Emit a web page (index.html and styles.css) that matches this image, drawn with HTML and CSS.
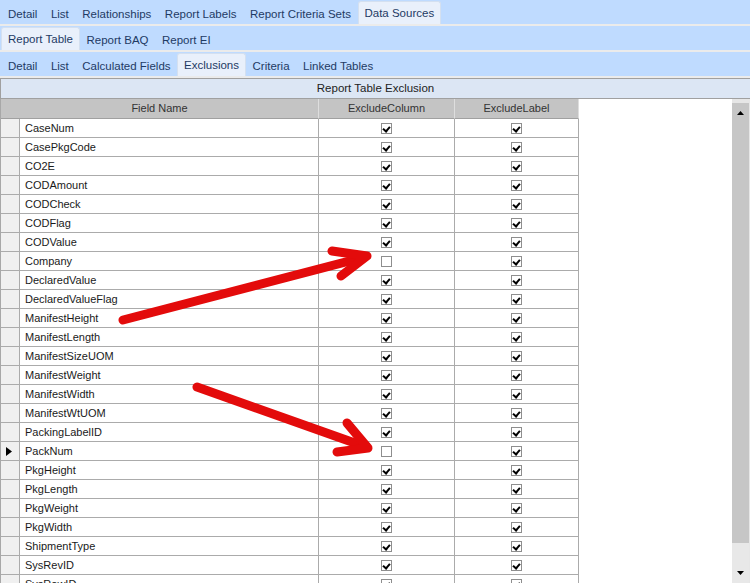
FILE: index.html
```html
<!DOCTYPE html>
<html>
<head>
<meta charset="utf-8">
<link rel="stylesheet" href="styles.css">
</head>
<body>
<div class="tabbar">
  <div class="tab">Detail</div>
  <div class="tab">List</div>
  <div class="tab">Relationships</div>
  <div class="tab">Report Labels</div>
  <div class="tab">Report Criteria Sets</div>
  <div class="tab active">Data Sources</div>
</div>
<div class="tabbar">
  <div class="tab active">Report Table</div>
  <div class="tab">Report BAQ</div>
  <div class="tab">Report EI</div>
</div>
<div class="tabbar">
  <div class="tab">Detail</div>
  <div class="tab">List</div>
  <div class="tab">Calculated Fields</div>
  <div class="tab active">Exclusions</div>
  <div class="tab">Criteria</div>
  <div class="tab">Linked Tables</div>
</div>
<div class="panel">
  <div class="title">Report Table Exclusion</div>
  <div class="body">
    <div class="grid">
      <div class="row head">
        <div class="c hname">Field Name</div>
        <div class="c hcol">ExcludeColumn</div>
        <div class="c hcol">ExcludeLabel</div>
      </div>
      <div class="row"><div class="c rh"></div><div class="c name">CaseNum</div><div class="c chk"><span class="cb on"></span></div><div class="c chk"><span class="cb on"></span></div></div>
      <div class="row"><div class="c rh"></div><div class="c name">CasePkgCode</div><div class="c chk"><span class="cb on"></span></div><div class="c chk"><span class="cb on"></span></div></div>
      <div class="row"><div class="c rh"></div><div class="c name">CO2E</div><div class="c chk"><span class="cb on"></span></div><div class="c chk"><span class="cb on"></span></div></div>
      <div class="row"><div class="c rh"></div><div class="c name">CODAmount</div><div class="c chk"><span class="cb on"></span></div><div class="c chk"><span class="cb on"></span></div></div>
      <div class="row"><div class="c rh"></div><div class="c name">CODCheck</div><div class="c chk"><span class="cb on"></span></div><div class="c chk"><span class="cb on"></span></div></div>
      <div class="row"><div class="c rh"></div><div class="c name">CODFlag</div><div class="c chk"><span class="cb on"></span></div><div class="c chk"><span class="cb on"></span></div></div>
      <div class="row"><div class="c rh"></div><div class="c name">CODValue</div><div class="c chk"><span class="cb on"></span></div><div class="c chk"><span class="cb on"></span></div></div>
      <div class="row"><div class="c rh"></div><div class="c name">Company</div><div class="c chk"><span class="cb"></span></div><div class="c chk"><span class="cb on"></span></div></div>
      <div class="row"><div class="c rh"></div><div class="c name">DeclaredValue</div><div class="c chk"><span class="cb on"></span></div><div class="c chk"><span class="cb on"></span></div></div>
      <div class="row"><div class="c rh"></div><div class="c name">DeclaredValueFlag</div><div class="c chk"><span class="cb on"></span></div><div class="c chk"><span class="cb on"></span></div></div>
      <div class="row"><div class="c rh"></div><div class="c name">ManifestHeight</div><div class="c chk"><span class="cb on"></span></div><div class="c chk"><span class="cb on"></span></div></div>
      <div class="row"><div class="c rh"></div><div class="c name">ManifestLength</div><div class="c chk"><span class="cb on"></span></div><div class="c chk"><span class="cb on"></span></div></div>
      <div class="row"><div class="c rh"></div><div class="c name">ManifestSizeUOM</div><div class="c chk"><span class="cb on"></span></div><div class="c chk"><span class="cb on"></span></div></div>
      <div class="row"><div class="c rh"></div><div class="c name">ManifestWeight</div><div class="c chk"><span class="cb on"></span></div><div class="c chk"><span class="cb on"></span></div></div>
      <div class="row"><div class="c rh"></div><div class="c name">ManifestWidth</div><div class="c chk"><span class="cb on"></span></div><div class="c chk"><span class="cb on"></span></div></div>
      <div class="row"><div class="c rh"></div><div class="c name">ManifestWtUOM</div><div class="c chk"><span class="cb on"></span></div><div class="c chk"><span class="cb on"></span></div></div>
      <div class="row"><div class="c rh"></div><div class="c name">PackingLabelID</div><div class="c chk"><span class="cb on"></span></div><div class="c chk"><span class="cb on"></span></div></div>
      <div class="row"><div class="c rh cur"><svg width="6" height="9" viewBox="0 0 6 9"><polygon points="0,0 6,4.5 0,9" fill="#000"/></svg></div><div class="c name">PackNum</div><div class="c chk focus"><span class="cb"></span></div><div class="c chk"><span class="cb on"></span></div></div>
      <div class="row"><div class="c rh"></div><div class="c name">PkgHeight</div><div class="c chk"><span class="cb on"></span></div><div class="c chk"><span class="cb on"></span></div></div>
      <div class="row"><div class="c rh"></div><div class="c name">PkgLength</div><div class="c chk"><span class="cb on"></span></div><div class="c chk"><span class="cb on"></span></div></div>
      <div class="row"><div class="c rh"></div><div class="c name">PkgWeight</div><div class="c chk"><span class="cb on"></span></div><div class="c chk"><span class="cb on"></span></div></div>
      <div class="row"><div class="c rh"></div><div class="c name">PkgWidth</div><div class="c chk"><span class="cb on"></span></div><div class="c chk"><span class="cb on"></span></div></div>
      <div class="row"><div class="c rh"></div><div class="c name">ShipmentType</div><div class="c chk"><span class="cb on"></span></div><div class="c chk"><span class="cb on"></span></div></div>
      <div class="row"><div class="c rh"></div><div class="c name">SysRevID</div><div class="c chk"><span class="cb on"></span></div><div class="c chk"><span class="cb on"></span></div></div>
      <div class="row"><div class="c rh"></div><div class="c name">SysRowID</div><div class="c chk"><span class="cb on"></span></div><div class="c chk"><span class="cb on"></span></div></div>
    </div>
    <div class="filler"></div>
    <div class="scroll">
      <div class="strip"></div>
      <div class="btn"><svg width="7" height="4" viewBox="0 0 7 4"><polygon points="0,4 3.5,0 7,4" fill="#000"/></svg></div>
      <div class="thumb"></div>
      <div class="track"></div>
      <div class="btn down"><svg width="7" height="4" viewBox="0 0 7 4"><polygon points="0,0 7,0 3.5,4" fill="#000"/></svg></div>
    </div>
  </div>
</div>
<svg class="arrows" width="750" height="583" viewBox="0 0 750 583">
  <g fill="none" stroke="#e30b0b" stroke-width="9" stroke-linecap="round" stroke-linejoin="round">
    <polyline points="123,320 365,257"/>
    <polyline points="332,251 367,256 341,276"/>
    <polyline points="197,387 366,447"/>
    <polyline points="347,423 368,448 337,452"/>
  </g>
</svg>
</body>
</html>
```

FILE: styles.css
```css
html, body {
  margin: 0;
  padding: 0;
}
body {
  width: 750px;
  height: 583px;
  overflow: hidden;
  position: relative;
  background: #fff;
  font-family: "Liberation Sans", Arial, sans-serif;
}
.tabbar {
  height: 24px;
  background: #bfdbff;
  border-bottom: 2px solid #ebebeb;
  display: flex;
  align-items: flex-start;
  padding-left: 1.25px;
}
.tab {
  height: 24px;
  box-sizing: border-box;
  padding: 4px 6.75px 0;
  line-height: 20px;
  font-size: 11.5px;
  color: #1e3a64;
  white-space: nowrap;
}
.tab.active {
  margin-top: 1px;
  height: 23px;
  padding: 1px 5.75px 0;
  background: #e9f0fb;
  border: 1px solid #d4e0f0;
  border-bottom: none;
  border-radius: 3px 3px 0 0;
}
.panel {
  border-top: 1px solid #a0a0a0;
}
.title {
  height: 19px;
  line-height: 19px;
  background: #dce6f4;
  border-bottom: 1px solid #a0a0a0;
  border-left: 1px solid #a0a0a0;
  text-align: center;
  font-size: 11.5px;
  color: #222;
}
.body {
  display: flex;
  height: 484px;
}
.grid {
  width: 579px;
  flex: 0 0 579px;
  box-sizing: border-box;
  border-left: 1px solid #a8a8a8;
}
.row {
  display: grid;
  grid-template-columns: 19px 299px 136px 124px;
  height: 19px;
}
.row.head {
  height: 20px;
  background: #c4c4c4;
}
.c {
  box-sizing: border-box;
  border-right: 1px solid #ababab;
  border-bottom: 1px solid #ababab;
  font-size: 11px;
  color: #1a1a1a;
  line-height: 18px;
  white-space: nowrap;
  overflow: hidden;
}
.head .c {
  line-height: 19px;
  text-align: center;
  color: #333;
  border-right-color: #dedede;
  border-bottom-color: #a0a0a0;
}
.hname {
  grid-column: span 2;
}
.rh {
  background: #f0f0f0;
}
.rh.cur {
  display: flex;
  align-items: center;
  padding-left: 5px;
}
.name {
  padding-left: 5px;
}
.chk {
  display: flex;
  align-items: center;
  justify-content: center;
}
.focus {
  position: relative;
}
.focus::after {
  content: "";
  position: absolute;
  left: -1px;
  top: -1px;
  right: -1px;
  bottom: -1px;
  border: 1px solid #000;
}
.cb {
  width: 11px;
  height: 11px;
  box-sizing: border-box;
  border: 1px solid #8e8e8e;
  background: #fff;
  position: relative;
}
.cb.on::after {
  content: "";
  position: absolute;
  left: 2px;
  top: 1px;
  width: 3px;
  height: 5px;
  border-right: 2px solid #000;
  border-bottom: 2px solid #000;
  transform: rotate(40deg);
}
.filler {
  flex: 1;
  background: #fff;
}
.scroll {
  width: 17px;
  flex: 0 0 17px;
  border-right: 1px solid #e6e6e6;
  display: flex;
  flex-direction: column;
  background: #e8e8e8;
}
.strip {
  height: 4px;
  background: #e6e6e6;
}
.btn {
  height: 20px;
  background: #c6c6c6;
  display: flex;
  align-items: center;
  justify-content: center;
}
.thumb {
  flex: 0 0 420px;
  background: #c6c6c6;
}
.track {
  flex: 1;
  background: #e8e8e8;
}
.btn.down {
  height: 27px;
  background: #e8e8e8;
  align-items: flex-start;
  padding-top: 15px;
  box-sizing: border-box;
}
.arrows {
  position: absolute;
  left: 0;
  top: 0;
  pointer-events: none;
}
```
